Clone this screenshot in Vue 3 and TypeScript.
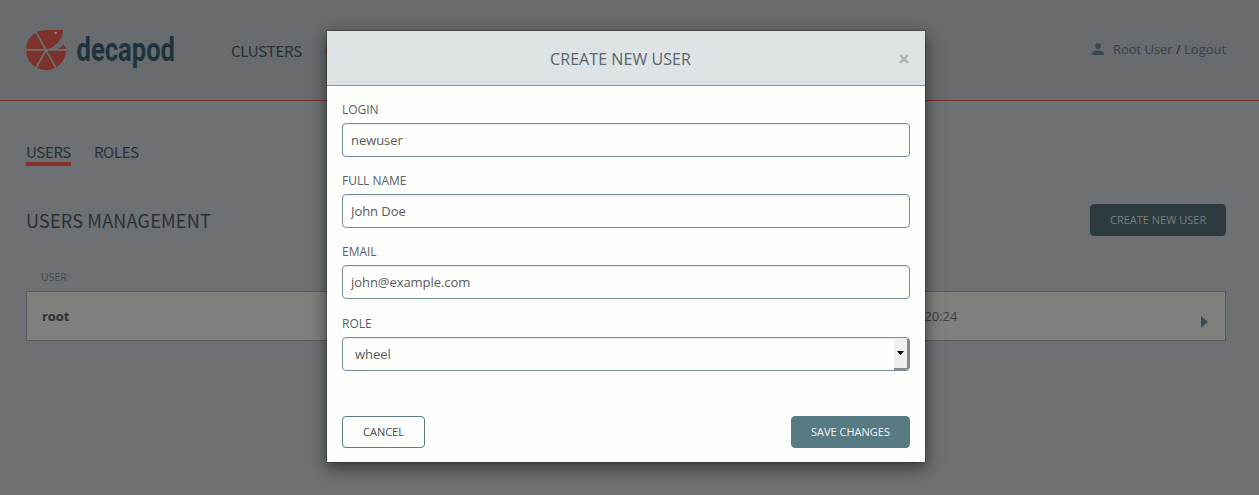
<script setup lang="ts">
import { ref } from 'vue'

interface Field {
  id: string
  label: string
  value: string
}

const fields = ref<Field[]>([
  { id: 'login', label: 'Login', value: 'newuser' },
  { id: 'fullname', label: 'Full name', value: 'John Doe' },
  { id: 'email', label: 'Email', value: 'john@example.com' },
])
const role = ref('wheel')
const tabs = ['Users', 'Roles']
const activeTab = ref('Users')
</script>

<template>
  <div class="page">
    <header class="header">
      <svg class="logo" width="152" height="42" viewBox="0 0 152 42">
        <g fill="#7d322b">
          <path d="M21 1H38C38 9 33 17 21.5 20.4L21 21H41A20 20 0 1 1 21 1Z" />
          <path d="M31 20.6C34.5 19.5 36.5 17.5 38.3 15.2C40 17 41 19 41 21Z" />
        </g>
        <g stroke="#6c7072" stroke-width="1.7" fill="none">
          <path d="M0 20.8H41.5M21 21L10.5 2.5M21 21L10.5 40M21 21L31.5 40" />
        </g>
        <circle cx="30.8" cy="4" r="1.3" fill="#85898b" />
        <text class="wordmark" x="51.5" y="32" textLength="98.5" lengthAdjust="spacingAndGlyphs">decapod</text>
      </svg>
      <nav class="nav">
        <a>CLUSTERS</a>
        <a class="hot">CONFIGURATIONS</a>
      </nav>
      <div class="account">
        <svg width="12" height="12" viewBox="0 0 12 12">
          <circle cx="6" cy="3" r="3" />
          <path d="M0 12V10.3C0 8.4 3.4 7.4 6 7.4S12 8.4 12 10.3V12Z" />
        </svg>
        <span>Root User <b>/</b> Logout</span>
      </div>
    </header>

    <main class="content">
      <div class="tabs">
        <a v-for="tab in tabs" :key="tab" :class="{ active: tab === activeTab }">{{ tab }}</a>
      </div>
      <div class="title-row">
        <h1>USERS MANAGEMENT</h1>
        <button class="btn create">CREATE NEW USER</button>
      </div>
      <div class="columns">USER</div>
      <div class="row">
        <strong>root</strong>
        <span class="date">20:20:24</span>
        <svg class="arrow" width="7" height="12" viewBox="0 0 7 12"><path d="M0 0L7 6L0 12Z" /></svg>
      </div>
    </main>

    <div class="overlay">
      <section class="modal">
        <div class="modal-header">
          <h2>CREATE NEW USER</h2>
          <svg class="close" width="10" height="10" viewBox="0 0 10 10"><path d="M1 1L9 9M9 1L1 9" /></svg>
        </div>
        <form class="modal-body">
          <div v-for="field in fields" :key="field.id" class="group">
            <label :for="field.id">{{ field.label }}</label>
            <input :id="field.id" v-model="field.value" type="text" />
          </div>
          <div class="group role">
            <label>Role</label>
            <div class="select">
              <span>{{ role }}</span>
              <i class="stepper">
                <svg width="7" height="4" viewBox="0 0 7 4"><path d="M0 0H7L3.5 4Z" /></svg>
              </i>
            </div>
          </div>
        </form>
        <footer class="modal-footer">
          <button class="btn cancel">CANCEL</button>
          <button class="btn save">SAVE CHANGES</button>
        </footer>
      </section>
    </div>
  </div>
</template>

<style>
body {
  overflow: hidden;
}
</style>

<style scoped>
* {
  box-sizing: border-box;
}
.page {
  position: relative;
  width: 1259px;
  height: 495px;
  overflow: hidden;
  background: #6d7174;
  color: #2b3034;
  font-family: 'Open Sans', sans-serif;
  font-size: 13px;
}
.header {
  display: flex;
  height: 101px;
  padding: 0 33px 0 25px;
  background: #686c6e;
  border-bottom: 1px solid #7d322f;
}
.logo {
  margin-top: 29px;
  flex: none;
  overflow: visible;
}
.wordmark {
  font: 700 33.5px Roboto, sans-serif;
  fill: #1e333d;
}
.nav {
  display: flex;
  gap: 23px;
  margin: 40px 0 0 54px;
  font: 15px/22px 'Noto Sans CJK SC', sans-serif;
  letter-spacing: -0.2px;
}
.nav .hot {
  color: #7d322b;
}
.account {
  display: flex;
  gap: 9px;
  margin: 40px 0 0 auto;
  color: #354247;
  line-height: 18px;
  letter-spacing: -0.03px;
}
.account svg {
  margin-top: 3px;
  fill: #354b53;
}
.account b {
  color: #24292c;
  font-weight: 400;
}
.content {
  padding: 40px 33px 0 26px;
}
.tabs {
  display: flex;
  gap: 23px;
  font: 15px/22px 'Noto Sans CJK SC', sans-serif;
  letter-spacing: -0.35px;
  text-transform: uppercase;
}
.tabs a {
  height: 25px;
}
.tabs .active {
  border-bottom: 4px solid #86302a;
}
.title-row {
  display: flex;
  justify-content: space-between;
  margin-top: 38px;
}
h1 {
  margin: 1px 0 0;
  font: 400 18px/30px 'Noto Sans CJK SC', sans-serif;
  letter-spacing: 0.22px;
}
.btn {
  height: 32px;
  padding: 0 19px 2px;
  border: 1px solid #587a82;
  border-radius: 4px;
  font: 11px 'Open Sans', sans-serif;
  white-space: nowrap;
}
.create {
  width: 136px;
  background: #2d3a40;
  border-color: #2d3a40;
  color: #7c7f7e;
}
.columns {
  margin: 33px 0 0 15px;
  height: 22px;
  color: #45494a;
  font-size: 10.5px;
  line-height: 16px;
}
.row {
  display: flex;
  align-items: center;
  height: 50px;
  padding: 0 17px 0 15px;
  background: #7f807c;
  border: 1px solid #565b5e;
}
.row strong {
  width: 864px;
  color: #292f35;
  letter-spacing: -0.1px;
}
.date {
  color: #3c4041;
}
.arrow {
  margin: 12px 0 0 auto;
  fill: #3b4a54;
}
.overlay {
  position: absolute;
  inset: 0;
  padding: 30px 0 0 326px;
}
.modal {
  width: 600px;
  height: 433px;
  background: #fefefd;
  background-clip: padding-box;
  border: 1px solid rgba(0, 0, 0, 0.2);
  box-shadow: 0 5px 15px rgba(0, 0, 0, 0.5);
}
.modal-header {
  display: flex;
  align-items: center;
  justify-content: center;
  position: relative;
  height: 55px;
  background: #dde2e5;
  border-bottom: 1px solid #f4685b;
}
h2 {
  margin: 2px 0 0 -11px;
  color: #5a646c;
  font: 400 16px/22px 'Open Sans', sans-serif;
  letter-spacing: 0.06px;
}
.close {
  position: absolute;
  top: 23px;
  right: 16px;
  fill: none;
  stroke: #acb0b2;
  stroke-width: 2.3;
}
.modal-body {
  padding: 15px 15px 0;
}
.group {
  margin-bottom: 15px;
  height: 56px;
}
.group.role {
  padding-top: 1px;
  height: 57px;
}
label {
  display: block;
  height: 22px;
  color: #5a5f66;
  font-size: 12px;
  line-height: 17px;
  letter-spacing: -0.03px;
  text-transform: uppercase;
}
input,
.select {
  display: flex;
  align-items: center;
  width: 100%;
  height: 34px;
  padding: 0 8px;
  background: #fefefd;
  border: 1px solid #7490a0;
  border-radius: 4px;
  box-shadow: inset 0 1px 1px rgba(0, 0, 0, 0.075);
  color: #5a5a5c;
  font: 13px 'Open Sans', sans-serif;
  letter-spacing: -0.06px;
  outline: none;
}
.select {
  justify-content: space-between;
  padding: 0 0 0 12px;
}
.stepper {
  display: flex;
  align-items: center;
  justify-content: center;
  width: 15px;
  height: 31px;
  background: #eef0ee;
  border: solid #898989;
  border-width: 0 2px 2px 0;
  border-radius: 0 0 3px 0;
}
.modal-footer {
  display: flex;
  justify-content: space-between;
  padding: 30px 15px 0;
}
.cancel {
  width: 83px;
  background: #fefefd;
  color: #42474b;
}
.save {
  width: 119px;
  background: #587a82;
  color: #f0f4f4;
}
</style>
